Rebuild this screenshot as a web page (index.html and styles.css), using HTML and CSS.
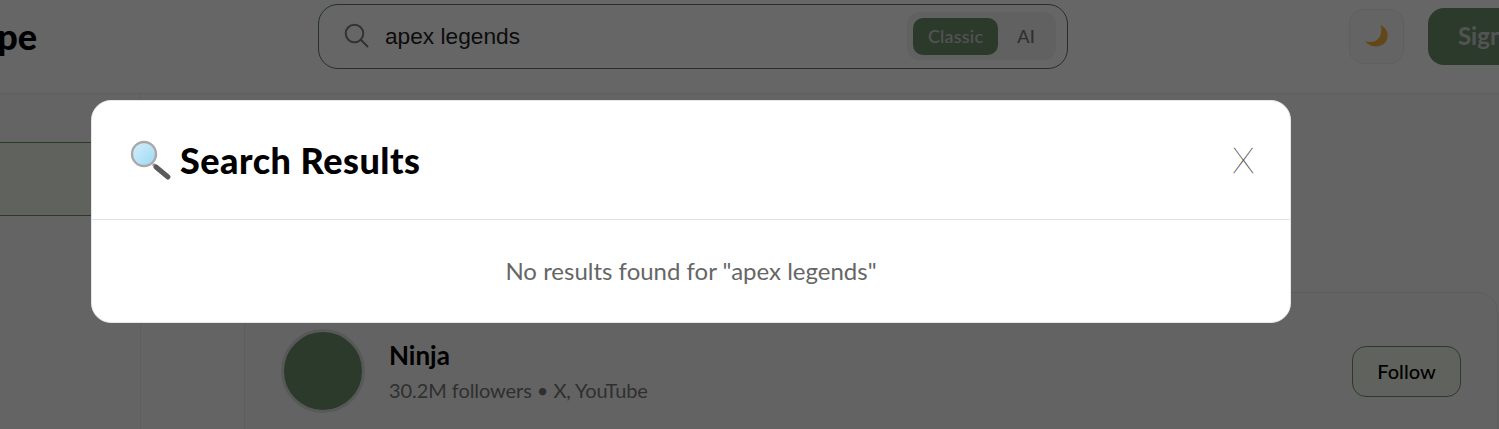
FILE: index.html
```html
<!DOCTYPE html>
<html lang="en">
<head>
    <meta charset="UTF-8">
    <meta name="viewport" content="width=device-width, initial-scale=1.0">
    <title>Search Results</title>
    <link rel="stylesheet" href="styles.css">
</head>
<body>
    <header class="topbar">
        <div class="logo"><span>pe</span></div>
        <div class="search-box">
            <svg class="search-icon" width="26" height="26" viewBox="0 0 26 26" fill="none" stroke="#7d7d7d" stroke-width="2" stroke-linecap="round">
                <circle cx="10.5" cy="10.5" r="8.8"/>
                <line x1="17" y1="17" x2="23.5" y2="23.5"/>
            </svg>
            <span class="search-text">apex legends</span>
            <div class="mode-toggle">
                <span class="mode-btn active">Classic</span>
                <span class="mode-btn">AI</span>
            </div>
        </div>
        <div class="theme-btn">
            <svg width="24" height="22" viewBox="0 0 24 22">
                <path d="M15.5 0C20.5 2.5 23.5 7 22.5 12.5C21.5 18 16.5 21.8 10.5 21.5C6.5 21.3 2.5 19.5 0 16.3C6 18 12 16.6 14.8 11.5C16.6 8 16.7 3.8 15.5 0Z" fill="#f5b53f"/>
            </svg>
        </div>
        <div class="sign-btn">Sign in</div>
    </header>

    <div class="layout">
        <aside class="sidebar">
            <div class="side-item"></div>
        </aside>
        <main class="feed">
            <div class="creator-card">
                <div class="avatar"></div>
                <div class="creator-info">
                    <div class="creator-name">Ninja</div>
                    <div class="creator-meta">30.2M followers • X, YouTube</div>
                </div>
                <div class="follow-btn">Follow</div>
            </div>
        </main>
    </div>

    <div class="overlay">
        <div class="modal">
            <div class="modal-head">
                <h2 class="modal-title">
                    <svg width="44" height="42" viewBox="0 0 44 42">
                        <defs>
                            <linearGradient id="lens" x1="0" y1="0" x2="1" y2="1">
                                <stop offset="0" stop-color="#d6f0fb"/>
                                <stop offset="1" stop-color="#9bd8f3"/>
                            </linearGradient>
                        </defs>
                        <line x1="25" y1="25" x2="28" y2="28" stroke="#9a9a9a" stroke-width="3"/>
                        <line x1="28" y1="28" x2="40" y2="38" stroke="#5a5a5a" stroke-width="5" stroke-linecap="round"/>
                        <circle cx="16" cy="15" r="12" fill="url(#lens)" stroke="#a9a9a9" stroke-width="2.4"/>
                    </svg>
                    <span>Search Results</span>
                </h2>
                <span class="modal-close">X</span>
            </div>
            <div class="modal-body">No results found for "apex legends"</div>
        </div>
    </div>
</body>
</html>
```

FILE: styles.css
```css
* {
    box-sizing: border-box;
}
html, body {
    height: 100%;
}
body {
    margin: 0;
    overflow: hidden;
    background: #fafafa;
    font-family: "Lato", "Open Sans", sans-serif;
    color: #000;
}
.topbar {
    display: flex;
    align-items: center;
    height: 94px;
    padding-bottom: 21px;
    background: #fff;
    border-bottom: 1px solid #eaeaea;
    overflow: hidden;
}
.logo {
    display: flex;
    justify-content: flex-end;
    flex: none;
    width: 37px;
    overflow: hidden;
    font-size: 36px;
    font-weight: 900;
    white-space: nowrap;
    margin-right: 281px;
}
.search-box {
    display: flex;
    align-items: center;
    flex: none;
    width: 750px;
    height: 65px;
    padding: 0 11px 0 25px;
    background: #fff;
    border: 1px solid #5a7a5a;
    border-radius: 20px;
}
.search-text {
    flex: 1;
    margin-left: 15px;
    font-family: "Liberation Sans", Arial, sans-serif;
    font-size: 22.7px;
    color: #222;
}
.mode-toggle {
    display: flex;
    align-items: center;
    gap: 4px;
    height: 48px;
    padding: 0 6px;
    background: #f3f3f3;
    border-radius: 12px;
}
.mode-btn {
    padding: 0 15px;
    height: 37px;
    line-height: 36px;
    font-size: 18px;
    font-weight: 500;
    letter-spacing: 0.2px;
    color: #777;
    border-radius: 10px;
}
.mode-btn.active {
    background: #6f916f;
    color: #d0d0d0;
}
.theme-btn {
    display: flex;
    align-items: center;
    justify-content: center;
    flex: none;
    width: 55px;
    height: 55px;
    margin-left: 281px;
    background: #fafafa;
    border: 1px solid #eee;
    border-radius: 14px;
}
.sign-btn {
    flex: none;
    width: 130px;
    height: 57px;
    margin-left: 24px;
    padding-left: 30px;
    line-height: 56px;
    font-size: 24px;
    font-weight: 700;
    color: #d0d0d0;
    background: #6f916f;
    border-radius: 16px;
    white-space: nowrap;
}
.layout {
    display: flex;
    height: 335px;
    overflow: hidden;
}
.sidebar {
    flex: none;
    width: 141px;
    padding-top: 48px;
    border-right: 1px solid #eaeaea;
}
.side-item {
    height: 74px;
    background: #eff5e8;
    border-top: 1px solid #6f916f;
    border-bottom: 1px solid #6f916f;
}
.feed {
    flex: 1;
    padding: 198px 1px 0 103px;
}
.creator-card {
    display: flex;
    align-items: center;
    height: 200px;
    padding: 0 36px 42px 36px;
    background: #f8f8f8;
    border: 1px solid #e8e8e8;
    border-radius: 20px;
}
.avatar {
    flex: none;
    width: 84px;
    height: 84px;
    background: #6f916f;
    border: 3px solid #dcdcdc;
    border-radius: 50%;
}
.creator-info {
    flex: 1;
    margin-left: 24px;
}
.creator-name {
    font-size: 26px;
    font-weight: 700;
    line-height: 30px;
}
.creator-meta {
    margin-top: 7px;
    font-size: 20px;
    letter-spacing: -0.07px;
    color: #777;
    line-height: 26px;
}
.follow-btn {
    flex: none;
    width: 109px;
    height: 51px;
    line-height: 49px;
    text-align: center;
    font-size: 20px;
    font-weight: 500;
    background: #f0f5ea;
    border: 1px solid #6f916f;
    border-radius: 14px;
}
.overlay {
    position: fixed;
    inset: 0;
    padding: 100px 0 0 91px;
    background: rgba(0, 0, 0, 0.6);
}
.modal {
    width: 1200px;
    height: 223px;
    background: #fff;
    border: 1px solid #e6e6e6;
    border-radius: 20px;
}
.modal-head {
    display: flex;
    align-items: center;
    justify-content: space-between;
    height: 119px;
    padding: 0 36px;
    border-bottom: 1px solid #e2e2e2;
}
.modal-title {
    display: flex;
    align-items: center;
    gap: 8px;
    margin: 0;
    font-size: 36px;
    font-weight: 900;
    letter-spacing: 0.5px;
}
.modal-close {
    margin-top: -2px;
    font-size: 36px;
    font-weight: 200;
    color: #000;
    -webkit-text-stroke: 0.3px #555;
}
.modal-body {
    padding-top: 36px;
    text-align: center;
    font-size: 24px;
    color: #666;
}
```
